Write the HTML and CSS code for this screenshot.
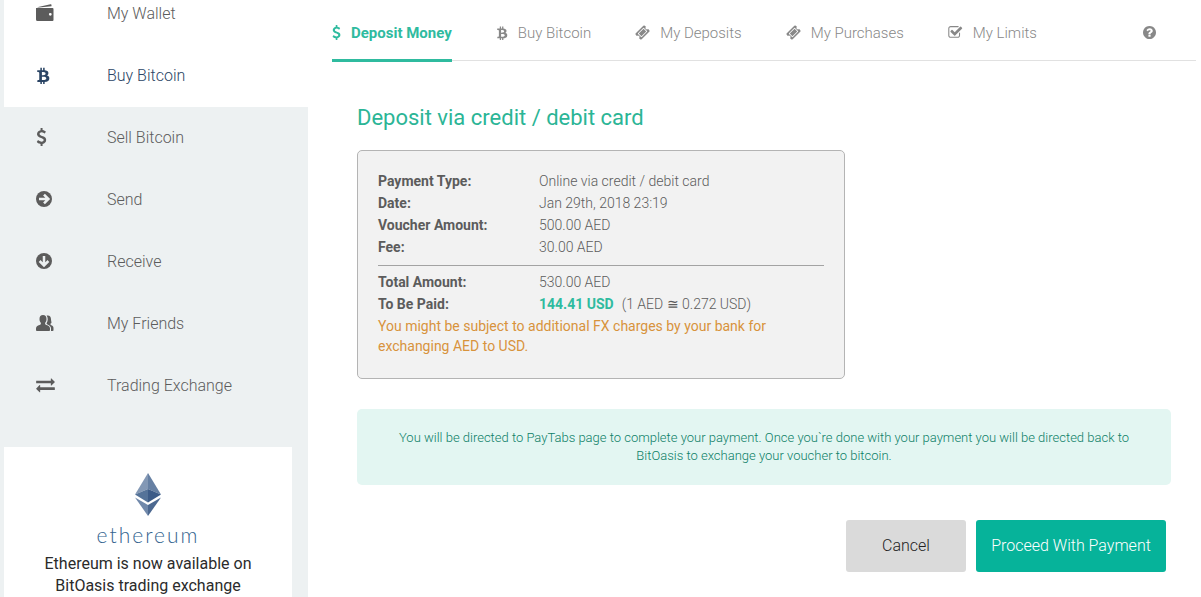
FILE: index.html
```html
<!DOCTYPE html>
<html lang="en">
<head>
    <meta charset="UTF-8">
    <meta name="viewport" content="width=device-width, initial-scale=1.0">
    <title>Deposit Money</title>
    <link rel="stylesheet" href="styles.css">
</head>
<body>
    <!-- shared icons -->
    <svg class="sprite" aria-hidden="true">
        <symbol id="dollar" viewBox="386 0 1024 1792">
            <path d="M1362 1185q0 153-99.500 263.500t-258.500 136.500v175q0 14-9 23t-23 9h-135q-13 0-22.500-9.500t-9.500-22.500v-175q-66-9-127.500-31t-101.500-44.500-74-48-46.500-37.500-17.500-18q-17-21-2-41l103-135q7-10 23-12 15-2 24 9l2 2q113 99 243 125 37 8 74 8 81 0 142.500-43t61.500-122q0-28-15-53t-33.500-42-58.500-37.500-66-32-80-32.500q-39-16-61.500-25t-61.500-26.500-62.500-31-56.500-35.500-53.500-42.500-43.500-49-35.500-58-21-66.500-8.500-78q0-138 98-242t255-134v-180q0-13 9.500-22.500t22.500-9.500h135q14 0 23 9t9 23v176q57 6 110.500 23t87 33.500 63.500 37.500 39 29 15 14q17 18 5 38l-81 146q-8 15-23 16-14 3-27-7-3-3-14.500-12t-39-26.500-58.500-32-74.500-26-85.500-11.500q-95 0-155 43t-60 111q0 26 8.500 48t29.500 41.500 39.500 33 56 31 60.500 27 70 27.500q53 20 81 31.500t76 35 75.500 42.500 62 50 53 63.500 31.500 76.500 13 94z"/>
        </symbol>
        <symbol id="bitcoin" viewBox="320 0 1344 1792">
            <path d="M1529 689q18 182-131 258 117 28 175 103t45 214q-7 71-32.500 125t-64.500 89-97 58.500-121.500 34.500-145.500 15v255h-154v-251q-80 0-122-1v252h-154v-255q-18 0-54-.5t-55-.5h-200l31-183h111q50 0 58-51v-402h16q-6-1-16-1v-287q-13-68-89-68h-111v-164l212 1q64 0 97-1v-252h154v247q82-2 122-2v-245h154v252q79 7 140 22.500t113 45 82.500 78 36.500 114.500zm-215 545q0-36-15-64t-37-46-57.500-30.500-65.500-18.500-74-9-69-3-64.500 1-47.500 1v338q8 0 37 .5t48 .5 53-1.500 58.500-4 57-8.500 55.500-14 47.500-21 39.500-30 24.500-40 9.500-51zm-71-476q0-33-12.500-58.500t-30.500-42-48-28-55-16.500-61.500-8-58-2.500-54 1-39.500.5v307q5 0 34.500.5t46.500 0 50-2 55-5.500 51.500-11 48.500-18.500 37-27 27-38.500 9-51z"/>
        </symbol>
        <symbol id="ticket" viewBox="0 0 1792 1792">
            <path d="M1024 452l316 316-572 572-316-316zm-211 979l618-618q19-19 19-45t-19-45l-362-362q-18-18-45-18t-45 18l-618 618q-19 19-19 45t19 45l362 362q18 18 45 18t45-18zm889-637l-907 908q-37 37-90.500 37t-90.500-37l-126-126q56-56 56-136t-56-136-136-56-136 56l-125-126q-37-37-37-90.500t37-90.500l907-906q37-37 90.500-37t90.500 37l125 125q-56 56-56 136t56 136 136 56 136-56l126 125q37 37 37 90.500t-37 90.500z"/>
        </symbol>
        <symbol id="check" viewBox="64 0 1728 1792">
            <path d="M1472 930v318q0 119-84.500 203.500t-203.500 84.500h-832q-119 0-203.500-84.500t-84.500-203.500v-832q0-119 84.500-203.500t203.500-84.500h832q63 0 117 25 15 7 18 23 3 17-9 29l-49 49q-10 10-23 10-3 0-9-2-23-6-45-6h-832q-66 0-113 47t-47 113v832q0 66 47 113t113 47h832q66 0 113-47t47-113v-254q0-13 9-22l64-64q10-10 23-10 6 0 12 3 20 8 20 29zm231-489l-814 814q-24 24-57 24t-57-24l-430-430q-24-24-24-57t24-57l110-110q24-24 57-24t57 24l263 263 647-647q24-24 57-24t57 24l110 110q24 24 24 57t-24 57z"/>
        </symbol>
        <symbol id="question" viewBox="128 128 1536 1536">
            <path d="M1024 1376v-192q0-14-9-23t-23-9h-192q-14 0-23 9t-9 23v192q0 14 9 23t23 9h192q14 0 23-9t9-23zm256-672q0-88-55.500-163t-138.500-116-170-41q-243 0-371 213-15 24 8 42l132 100q7 6 19 6 16 0 25-12 53-68 86-92 34-24 86-24 48 0 85.500 26t37.500 59q0 38-20 61t-68 45q-63 28-115.500 86.500t-52.500 125.500v36q0 14 9 23t23 9h192q14 0 23-9t9-23q0-19 21.500-49.500t54.500-49.500q32-18 49-28.500t46-35 44.500-48 28-60.500 12.500-81zm384 192q0 209-103 385.500t-279.500 279.500-385.500 103-385.500-103-279.500-279.500-103-385.500 103-385.500 279.500-279.500 385.500-103 385.500 103 279.500 279.500 103 385.500z"/>
        </symbol>
        <symbol id="exchange" viewBox="0 160 1792 1536">
            <path d="M1792 1184v192q0 13-9.500 22.500t-22.500 9.500h-1376v192q0 13-9.500 22.500t-22.500 9.500q-12 0-24-10l-319-320q-9-9-9-22 0-14 9-23l320-320q9-9 23-9 13 0 22.500 9.500t9.500 22.500v192h1376q13 0 22.500 9.500t9.500 22.500zm0-544q0 14-9 23l-320 320q-9 9-23 9-13 0-22.500-9.500t-9.500-22.500v-192h-1376q-13 0-22.500-9.500t-9.500-22.500v-192q0-13 9.500-22.500t22.500-9.500h1376v-192q0-14 9-23t23-9q12 0 24 10l319 319q9 9 9 23z"/>
        </symbol>
        <symbol id="wallet" viewBox="0 0 18 18">
            <path d="M1 3.200 14.500.3Q15.500.1 15.500 1v1.200L3 3.500zM0 3.900h16.500q1 0 1 1v11q0 1-1 1h-15q-1.500 0-1.500-1.500zM14.300 8.900a1.400 1.400 0 1 0 .01 2.800a1.400 1.400 0 1 0-.01-2.800z" fill-rule="evenodd"/>
        </symbol>
        <symbol id="arrow" viewBox="0 0 16 16">
            <circle cx="8" cy="8" r="8"/>
            <path class="cut" d="M3 8h9M8 3.600 12.400 8 8 12.400"/>
        </symbol>
        <symbol id="friends" viewBox="0 0 18 17">
            <path d="M7 0c2.300 0 3.500 1.500 3.500 3.900 0 1.600-.5 2.900-1.300 3.800-.4 1.400.2 1.800 1.300 2.300 2.100.8 3.500 1.500 3.500 3.600v1.700q0 .7-1 .7H1q-1 0-1-.7v-1.700c0-2.100 1.400-2.800 3.500-3.600 1.100-.5 1.700-.9 1.300-2.300C4 6.800 3.500 5.500 3.500 3.900 3.500 1.500 4.700 0 7 0z"/>
            <path d="M10.600.6C13.200-.2 15 1.400 15 4.300c0 1.500 1 3.500.1 3.900-1.200.5-1.100 1.400.2 2 1.800.7 2.200 1.500 2.200 3.200v1.900q0 .7-1 .7h-1.500v-2.500c0-2-1.200-3-3.500-4-1-.4-1.100-.8-.8-1.400 1.300-2.100 1.500-5.300-.1-7.500z"/>
        </symbol>
    </svg>

    <div class="page">
        <aside class="sidebar">
            <nav class="menu">
                <a href="#" class="light"><svg class="wallet"><use href="#wallet"/></svg><span>My Wallet</span></a>
                <a href="#" class="light current"><svg class="bitcoin"><use href="#bitcoin"/></svg><span>Buy Bitcoin</span></a>
                <a href="#"><svg class="dollar"><use href="#dollar"/></svg><span>Sell Bitcoin</span></a>
                <a href="#"><svg class="arrow"><use href="#arrow"/></svg><span>Send</span></a>
                <a href="#"><svg class="arrow down"><use href="#arrow"/></svg><span>Receive</span></a>
                <a href="#"><svg class="friends"><use href="#friends"/></svg><span>My Friends</span></a>
                <a href="#"><svg class="exchange"><use href="#exchange"/></svg><span>Trading Exchange</span></a>
            </nav>
            <div class="promo">
                <svg class="diamond" viewBox="0 0 26 43">
                    <path fill="#8398b5" d="M13 0v16L0 21.500z"/>
                    <path fill="#6680a3" d="M13 0v16l13 5.500z"/>
                    <path fill="#557399" d="M13 16v13.500L0 21.500z"/>
                    <path fill="#3d5c88" d="M13 16v13.500l13-8z"/>
                    <path fill="#7189ab" d="M0 24.500l13 7.500v11z"/>
                    <path fill="#4c6890" d="M26 24.500L13 32v11z"/>
                </svg>
                <div class="wordmark">ethereum</div>
                <p>Ethereum is now available on BitOasis trading exchange</p>
            </div>
        </aside>

        <main class="main">
            <nav class="tabs">
                <a href="#" class="active"><svg class="dollar"><use href="#dollar"/></svg>Deposit Money</a>
                <a href="#"><svg class="bitcoin"><use href="#bitcoin"/></svg>Buy Bitcoin</a>
                <a href="#"><svg class="ticket"><use href="#ticket"/></svg>My Deposits</a>
                <a href="#"><svg class="ticket"><use href="#ticket"/></svg>My Purchases</a>
                <a href="#"><svg class="check"><use href="#check"/></svg>My Limits</a>
                <a href="#" class="help" aria-label="Help"><svg class="question"><use href="#question"/></svg></a>
            </nav>

            <div class="content">
                <h1>Deposit via credit / debit card</h1>
                <div class="summary">
                    <dl>
                        <dt>Payment Type:</dt><dd>Online via credit / debit card</dd>
                        <dt>Date:</dt><dd>Jan 29th, 2018 23:19</dd>
                        <dt>Voucher Amount:</dt><dd>500.00 AED</dd>
                        <dt>Fee:</dt><dd>30.00 AED</dd>
                    </dl>
                    <hr>
                    <dl>
                        <dt>Total Amount:</dt><dd>530.00 AED</dd>
                        <dt>To Be Paid:</dt><dd><strong>144.41 USD</strong>(1 AED ≅ 0.272 USD)</dd>
                    </dl>
                    <p class="warning">You might be subject to additional FX charges by your bank for exchanging AED to USD.</p>
                </div>

                <p class="notice">You will be directed to PayTabs page to complete your payment. Once you`re done with your payment you will be directed back to BitOasis to exchange your voucher to bitcoin.</p>

                <div class="buttons">
                    <button type="button" class="cancel">Cancel</button>
                    <button type="button" class="proceed">Proceed With Payment</button>
                </div>
            </div>
        </main>
    </div>
</body>
</html>
```
FILE: styles.css
```css
* {
    box-sizing: border-box;
}
body {
    font-family: Roboto, "Liberation Sans", sans-serif;
    font-weight: 300;
    margin: 0;
    color: #5c5c5c;
    background-color: #fff;
    height: 100vh;
    overflow: hidden;
}
a {
    color: inherit;
    text-decoration: none;
}
svg {
    fill: currentColor;
    flex: none;
}
.sprite {
    display: none;
}
.page {
    display: flex;
    min-height: 100vh;
}

/* sidebar */
.sidebar {
    width: 308px;
    flex: none;
    padding-left: 4px;
    background-color: #edf1f2;
}
.menu {
    margin-top: -17px;
    margin-bottom: 30px;
}
.menu a {
    display: grid;
    grid-template-columns: 71px 1fr;
    align-items: center;
    height: 62px;
    padding: 0 0 2px 32px;
    font-size: 16px;
}
.menu a.light {
    background-color: #fff;
}
.menu a.current {
    color: #2b4565;
}
.menu .wallet {
    width: 18px;
    height: 18px;
}
.menu .bitcoin {
    width: 14px;
    height: 18px;
}
.menu .dollar {
    width: 11px;
    height: 18px;
}
.menu .arrow {
    width: 16px;
    height: 16px;
}
.menu .friends {
    width: 18px;
    height: 17px;
}
.menu .exchange {
    width: 19px;
    height: 16px;
}
.cut {
    fill: none;
    stroke: #edf1f2;
    stroke-width: 2.5px;
}
.down {
    transform: rotate(90deg);
}
.promo {
    margin-right: 16px;
    padding: 26px 30px;
    background-color: #fff;
    color: #2b2b2b;
    text-align: center;
}
.diamond {
    display: block;
    width: 26px;
    height: 43px;
    margin: 0 auto;
}
.wordmark {
    margin: 7px 0 6px;
    color: #34648f;
    font-family: Lato, sans-serif;
    font-weight: 300;
    font-size: 21px;
    line-height: 24px;
    letter-spacing: 2px;
}
.promo p {
    margin: 0;
    font-size: 16px;
    font-weight: 400;
    line-height: 22px;
}

/* main area */
.main {
    flex: 1;
    min-width: 0;
    padding: 0 5px 0 24px;
}
.tabs {
    display: flex;
    gap: 44px;
    height: 61px;
    border-bottom: 1px solid #e1e1e1;
    font-size: 15px;
    color: #888;
}
.tabs a {
    display: flex;
    align-items: center;
    gap: 10px;
    height: 62px;
    padding-top: 6px;
    border-bottom: 3px solid transparent;
    white-space: nowrap;
}
.tabs a.active {
    color: #2fbb9f;
    font-weight: 700;
    border-color: #2fbb9f;
}
.tabs a.help {
    margin-left: auto;
    margin-right: 40px;
}
.tabs .dollar {
    width: 9px;
    height: 15px;
}
.tabs .bitcoin {
    width: 12px;
    height: 15px;
}
.tabs .ticket,
.tabs .check {
    width: 15px;
    height: 15px;
}
.tabs .question {
    width: 13px;
    height: 13px;
}
.content {
    padding: 44px 25px 25px;
}
h1 {
    margin: 0 0 19px;
    color: #2bb596;
    font-size: 22px;
    font-weight: 400;
    line-height: 26px;
}
.summary {
    width: 60%;
    padding: 19px 20px 22px;
    background-color: #f2f2f2;
    border: 1px solid #b4b4b4;
    border-radius: 5px;
    font-size: 14px;
    line-height: 22px;
}
.summary dl {
    display: grid;
    grid-template-columns: 161px 1fr;
    margin: 0;
}
.summary dt {
    font-weight: 700;
}
.summary dd {
    margin: 0;
}
.summary strong {
    margin-right: 8px;
    color: #2fbb9f;
    font-weight: 700;
}
.summary hr {
    margin: 7px 0 5px;
    border: 0;
    border-top: 1px solid #a3a3a3;
}
.warning {
    margin: 1px 0 0;
    color: #d8933c;
    font-weight: 400;
    line-height: 20px;
}
.notice {
    margin: 30px 0 35px;
    padding: 20px 40px;
    background-color: #e3f6f2;
    border-radius: 5px;
    color: #0c8067;
    font-size: 13px;
    line-height: 18px;
    text-align: center;
}
.buttons {
    display: flex;
    justify-content: flex-end;
    gap: 10px;
    padding-right: 5px;
}
button {
    height: 52px;
    padding: 0 14px 2px;
    border: none;
    border-radius: 3px;
    font-family: inherit;
    font-size: 16px;
    font-weight: 300;
    cursor: pointer;
}
.cancel {
    min-width: 120px;
    background-color: #dadada;
    color: #222;
}
.proceed {
    min-width: 190px;
    background-color: #06b39a;
    color: #fff;
}
```
